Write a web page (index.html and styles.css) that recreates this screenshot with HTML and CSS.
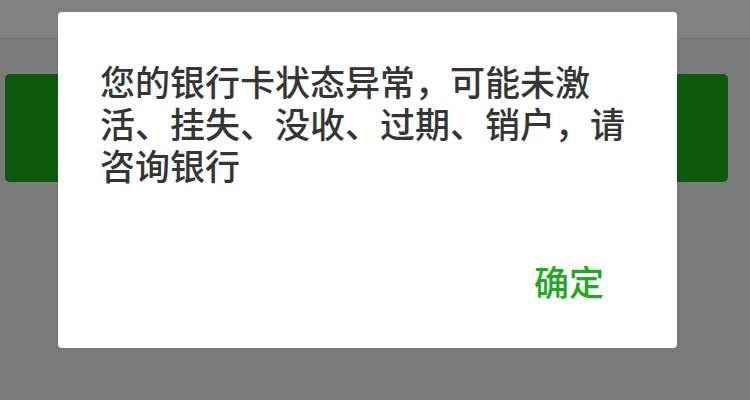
FILE: index.html
```html
<!DOCTYPE html>
<html lang="zh-CN">
<head>
<meta charset="utf-8">
<title>提示</title>
<link rel="stylesheet" href="styles.css">
</head>
<body>
<div class="page">
  <div class="topbar"></div>
  <div class="content">
    <div class="primary-btn"></div>
  </div>
</div>
<div class="mask">
  <div class="dialog">
    <div class="message">您的银行卡状态异常，可能未激活、挂失、没收、过期、销户，请咨询银行</div>
    <div class="footer"><span class="confirm">确定</span></div>
  </div>
</div>
</body>
</html>
```

FILE: styles.css
```css
html, body {
  margin: 0;
  padding: 0;
  width: 750px;
  height: 400px;
  overflow: hidden;
  font-family: "Noto Sans CJK SC", "Noto Sans", sans-serif;
}
.page {
  width: 750px;
  height: 400px;
  background: #7a7a7a;
  display: flex;
  flex-direction: column;
}
.topbar {
  height: 38px;
  background: #818181;
  border-bottom: 1px solid #747474;
}
.content {
  padding: 35px 22px 0 5px;
}
.primary-btn {
  height: 108px;
  background: #0c590c;
  border-radius: 5px;
}
.mask {
  position: absolute;
  inset: 0;
}
.dialog {
  position: absolute;
  left: 58px;
  top: 12px;
  width: 619px;
  height: 336px;
  box-sizing: border-box;
  background: #ffffff;
  border-radius: 4px;
  padding: 48px 42px 0 42px;
}
.message {
  font-size: 35px;
  font-weight: 500;
  line-height: 42px;
  color: #353535;
}
.footer {
  margin-top: 74px;
  display: flex;
  justify-content: flex-end;
  padding-right: 31px;
}
.confirm {
  font-size: 35px;
  font-weight: 500;
  line-height: 42px;
  color: #22a822;
}
```
